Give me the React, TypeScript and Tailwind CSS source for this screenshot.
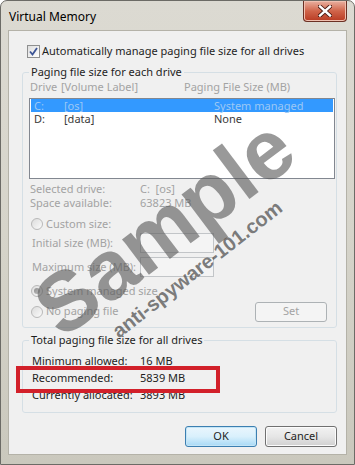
import React from 'react'

const font = { fontFamily: '"Noto Sans", "Open Sans", sans-serif' }

function Radio({ checked }: { checked?: boolean }) {
  return (
    <span className="flex h-[12px] w-[12px] shrink-0 items-center justify-center rounded-full border border-[#b9b9b9] bg-gradient-to-br from-[#dcdcdc] to-[#fbfbfb]">
      {checked && <span className="h-[6px] w-[6px] rounded-full bg-gradient-to-br from-[#8c8c8c] to-[#c4c4c4]" />}
    </span>
  )
}

function WinButton({ label, isDefault }: { label: string; isDefault?: boolean }) {
  return (
    <div
      className={
        'flex h-[21px] w-[72px] items-center justify-center rounded-[3px] border text-[11px] text-[#1e1e1e] ' +
        (isDefault
          ? 'border-[#3c7fb1] bg-gradient-to-b from-[#eaf6fd] via-[#d9f0fc] to-[#a7d9f5] shadow-[inset_0_0_0_1px_#c4e5f6]'
          : 'border-[#707070] bg-gradient-to-b from-[#f2f2f2] via-[#e6e6e6] to-[#d0d0d0] shadow-[inset_0_0_0_1px_#fcfcfc]')
      }
    >
      {label}
    </div>
  )
}

export default function App() {
  return (
    <div
      className="relative flex h-[465px] w-[355px] flex-col overflow-hidden whitespace-nowrap rounded-t-[7px] border border-[#6c6b66] bg-gradient-to-b from-[#dcdad2] via-[#d6d4ca] to-[#cac8bd]"
      style={font}
    >
      {/* title bar */}
      <div className="flex h-[29px] shrink-0 items-start justify-between pl-[8px] pr-[7px]">
        <span className="mt-[8px] text-[12px] leading-[16px] text-black">Virtual Memory</span>
        <div className="flex h-[21px] w-[44px] items-center justify-center rounded-b-[4px] border border-t-0 border-[#6b3024] bg-gradient-to-b from-[#e8b0a0] via-[#d0644a] to-[#b83a22] shadow-[inset_0_0_0_1px_#f0c0b0]">
          <svg width="14" height="12" viewBox="0 0 14 12">
            <path d="M2 1.5 L12 10.5 M12 1.5 L2 10.5" stroke="#4a1a12" strokeWidth="4.2" strokeLinecap="square" />
            <path d="M2 1.5 L12 10.5 M12 1.5 L2 10.5" stroke="#ffffff" strokeWidth="2.4" strokeLinecap="square" />
          </svg>
        </div>
      </div>

      {/* client area */}
      <div className="ml-[7px] h-[425px] w-[339px] border border-[#b4b2a8] bg-[#f0f0f0] text-[11px] text-[#1e1e1e]">
        <div className="ml-[18px] mt-[12px] flex h-[16px] items-center gap-[2px]">
          <span className="flex h-[13px] w-[13px] items-center justify-center border border-[#8e8f8f] bg-gradient-to-br from-[#dedede] to-[#ffffff]">
            <svg width="9" height="9" viewBox="0 0 9 9">
              <path d="M1 4.5 L3.5 7.5 L8 1" fill="none" stroke="#3d5596" strokeWidth="1.8" />
            </svg>
          </span>
          <span className="leading-[16px]">Automatically manage paging file size for all drives</span>
        </div>

        {/* group 1 */}
        <fieldset className="ml-[13px] mt-[5px] h-[264px] w-[315px] rounded-[3px] border border-[#d5dfe5] text-[#a3a3a3]">
          <legend className="ml-[6px] px-[2px] leading-[16px] text-[#1e1e1e]">Paging file size for each drive</legend>
          <div className="ml-[7px] flex h-[14px] items-center leading-[14px]">
            <span className="w-[31px]">Drive</span>
            <span className="w-[123px]">[Volume Label]</span>
            <span>Paging File Size (MB)</span>
          </div>
          <div className="ml-[6px] mt-[4px] h-[81px] w-[306px] border border-[#828790] bg-white">
            <div className="mx-[1px] flex h-[13px] items-center bg-[#3399ff] pl-[3px] leading-[13px] text-[#9cc8f5]">
              <span className="w-[30px]">C:</span>
              <span className="w-[150px]">[os]</span>
              <span>System managed</span>
            </div>
            <div className="mx-[1px] flex h-[13px] items-center pl-[3px] leading-[13px] text-[#3a3a3a]">
              <span className="w-[30px]">D:</span>
              <span className="w-[150px]">[data]</span>
              <span>None</span>
            </div>
          </div>
          <div className="ml-[7px] mt-[3px] flex h-[14px] items-center leading-[14px]">
            <span className="w-[110px]">Selected drive:</span>
            <span>C:&nbsp; [os]</span>
          </div>
          <div className="ml-[7px] flex h-[14px] items-center leading-[14px]">
            <span className="w-[110px]">Space available:</span>
            <span>63823 MB</span>
          </div>
          <div className="ml-[8px] mt-[6px] flex h-[16px] items-center gap-[3px] leading-[16px]">
            <Radio />
            <span>Custom size:</span>
          </div>
          <div className="ml-[9px] mt-[1px] flex h-[20px] items-center">
            <span className="w-[108px]">Initial size (MB):</span>
            <span className="h-[20px] w-[74px] border border-[#c2c5c8] bg-[#f4f4f4]" />
          </div>
          <div className="ml-[9px] mt-[4px] flex h-[20px] items-center">
            <span className="w-[108px]">Maximum size (MB):</span>
            <span className="h-[20px] w-[74px] border border-[#c2c5c8] bg-[#f4f4f4]" />
          </div>
          <div className="ml-[8px] mt-[6px] flex h-[16px] items-center gap-[3px] leading-[16px]">
            <Radio checked />
            <span>System managed size</span>
          </div>
          <div className="ml-[8px] mr-[9px] mt-[2px] flex h-[21px] items-center justify-between">
            <div className="flex items-center gap-[3px]">
              <Radio />
              <span>No paging file</span>
            </div>
            <div className="flex h-[20px] w-[72px] items-center justify-center rounded-[3px] border border-[#adb2b5] bg-[#f4f4f4]">
              Set
            </div>
          </div>
        </fieldset>

        {/* group 2 */}
        <fieldset className="ml-[13px] mt-[4px] h-[81px] w-[315px] rounded-[3px] border border-[#d5dfe5]">
          <legend className="ml-[6px] px-[2px] leading-[16px]">Total paging file size for all drives</legend>
          <div className="ml-[9px] mt-[5px] flex h-[17px] items-center">
            <span className="w-[108px]">Minimum allowed:</span>
            <span>16 MB</span>
          </div>
          <div className="ml-[9px] flex h-[17px] items-center">
            <span className="w-[108px]">Recommended:</span>
            <span>5839 MB</span>
          </div>
          <div className="ml-[9px] flex h-[17px] items-center">
            <span className="w-[108px]">Currently allocated:</span>
            <span>3893 MB</span>
          </div>
        </fieldset>

        <div className="mr-[9px] mt-[13px] flex justify-end gap-[8px]">
          <WinButton label="OK" isDefault />
          <WinButton label="Cancel" />
        </div>
      </div>

      {/* highlight box */}
      <div className="absolute left-[15px] top-[365px] h-[27px] w-[204px] border-[4px] border-[#d2202a]" />

      {/* watermark */}
      <div
        className="pointer-events-none absolute left-[163px] top-[226px] -translate-x-1/2 -translate-y-1/2 -rotate-[37deg] text-[84px] font-bold leading-none text-[rgba(90,90,90,0.62)]"
        style={{ fontFamily: '"Liberation Sans", Arial, sans-serif' }}
      >
        Sample
      </div>
      <div
        className="pointer-events-none absolute left-[196px] top-[268px] -translate-x-1/2 -translate-y-1/2 -rotate-[38deg] text-[20px] font-bold leading-none text-[rgba(70,70,70,0.7)]"
        style={{ fontFamily: '"Liberation Sans", Arial, sans-serif' }}
      >
        anti-spyware-101.com
      </div>
    </div>
  )
}
